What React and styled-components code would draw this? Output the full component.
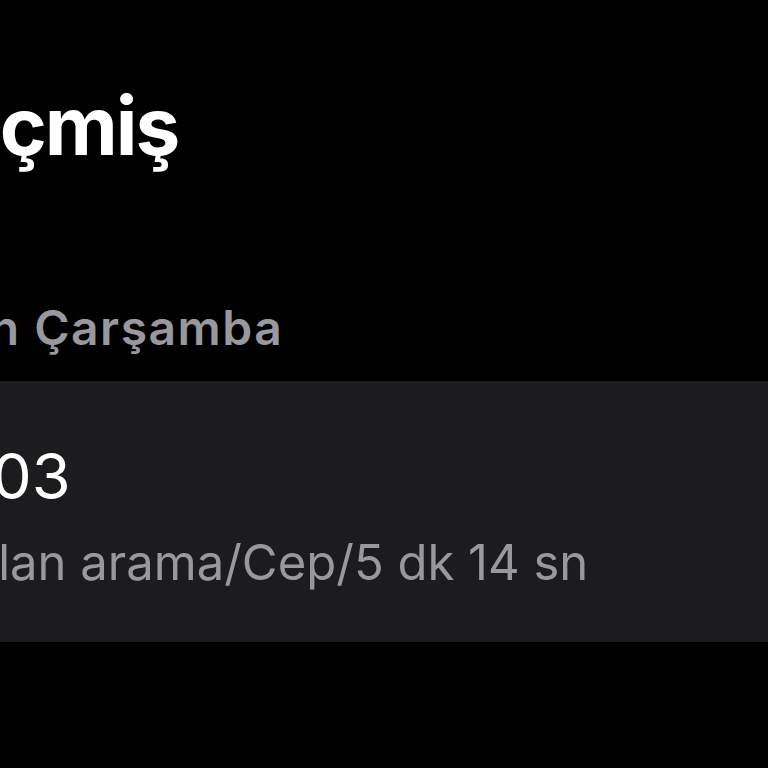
import React from 'react'
import styled, { createGlobalStyle } from 'styled-components'

const GlobalStyle = createGlobalStyle`
  html, body {
    margin: 0;
    padding: 0;
    background: #000;
  }
  body {
    font-family: Inter, "Noto Sans", "Liberation Sans", sans-serif;
    -webkit-font-smoothing: antialiased;
  }
`

const Screen = styled.div`
  width: 768px;
  height: 768px;
  overflow: hidden;
  background: #000;
  display: flex;
  flex-direction: column;
`

const Line = styled.div`
  margin-left: ${({ shift }) => shift}px;
  white-space: nowrap;
  line-height: 1;
`

const Title = styled(Line)`
  margin-top: 86px;
  font-size: 80px;
  font-weight: 700;
  color: #fff;
  letter-spacing: -2px;
`

const SectionHeader = styled(Line)`
  margin-top: 138px;
  font-size: 48px;
  font-weight: 600;
  color: #98989e;
  letter-spacing: 1.5px;
`

const Card = styled.div`
  margin-top: 29px;
  background: #1c1c1e;
  padding: 64px 0 55px;
  display: flex;
  flex-direction: column;
  gap: 30px;
`

const Number = styled(Line)`
  font-size: 63px;
  font-weight: 400;
  color: #fff;
`

const Detail = styled(Line)`
  font-size: 49px;
  font-weight: 400;
  color: #98989e;
`

const App = () => (
  <>
    <GlobalStyle />
    <Screen>
      <Title shift={-104}>Geçmiş</Title>
      <SectionHeader shift={-137}>Geçen Çarşamba</SectionHeader>
      <Card>
        <Number shift={-8}>03</Number>
        <Detail shift={-101}>Yapılan arama/Cep/5 dk 14 sn</Detail>
      </Card>
    </Screen>
  </>
)

export default App
